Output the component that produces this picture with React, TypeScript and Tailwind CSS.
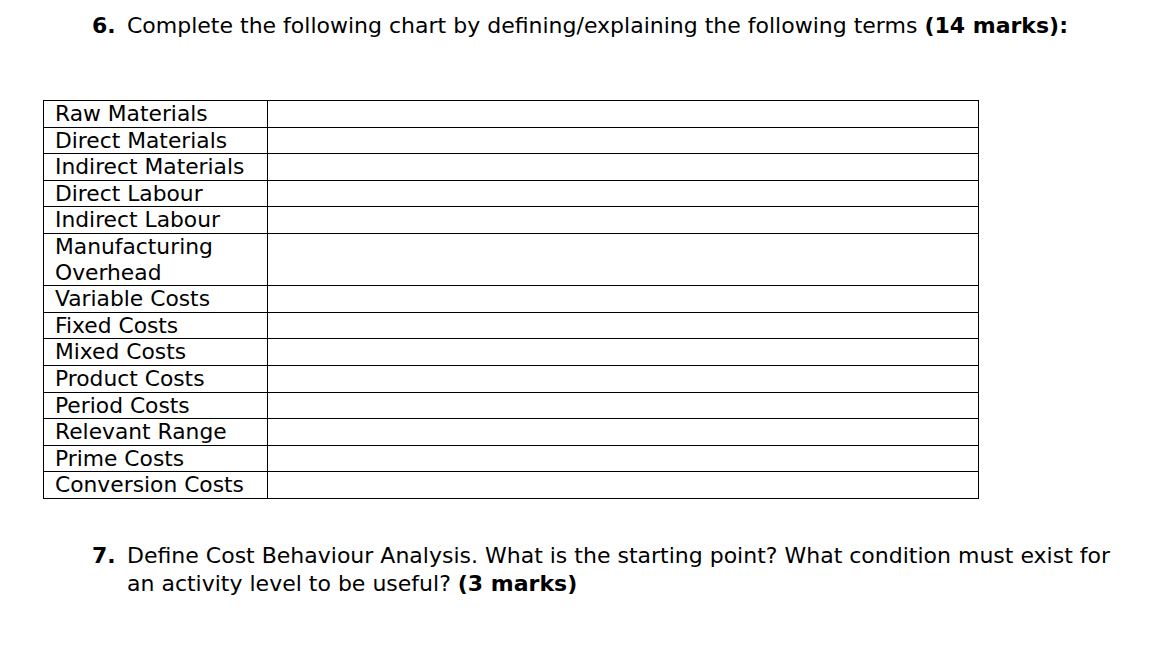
import React from "react";

const rows: string[][] = [
  ["Raw Materials"],
  ["Direct Materials"],
  ["Indirect Materials"],
  ["Direct Labour"],
  ["Indirect Labour"],
  ["Manufacturing", "Overhead"],
  ["Variable Costs"],
  ["Fixed Costs"],
  ["Mixed Costs"],
  ["Product Costs"],
  ["Period Costs"],
  ["Relevant Range"],
  ["Prime Costs"],
  ["Conversion Costs"],
];

export default function App() {
  return (
    <div
      className="w-[1171px] h-[658px] bg-white text-black overflow-hidden"
      style={{ fontFamily: '"DejaVu Sans", sans-serif' }}
    >
      <div className="pt-[11px] pl-[92px] flex text-[22px] leading-[29px]">
        <span className="font-bold w-[35px] shrink-0">6.</span>
        <span>
          Complete the following chart by defining/explaining the following terms{" "}
          <span className="font-bold">(14 marks):</span>
        </span>
      </div>

      <div className="mt-[60px] ml-[43px]">
        <table className="border-collapse text-[21.8px] leading-[25.6px]">
          <tbody>
            {rows.map((r, i) => (
              <tr key={i}>
                <td className="border border-black w-[224px] pl-[11px] pr-1 py-0 align-top whitespace-nowrap">
                  {r.map((l, j) => (
                    <div key={j}>{l}</div>
                  ))}
                </td>
                <td className="border border-black w-[711px] p-0"></td>
              </tr>
            ))}
          </tbody>
        </table>
      </div>

      <div className="mt-[43px] pl-[92px] flex text-[22px] leading-[28px] w-[1122px]">
        <span className="font-bold w-[35px] shrink-0">7.</span>
        <span>
          Define Cost Behaviour Analysis. What is the starting point? What condition must exist for an activity level to be useful?{" "}
          <span className="font-bold">(3 marks)</span>
        </span>
      </div>
    </div>
  );
}
